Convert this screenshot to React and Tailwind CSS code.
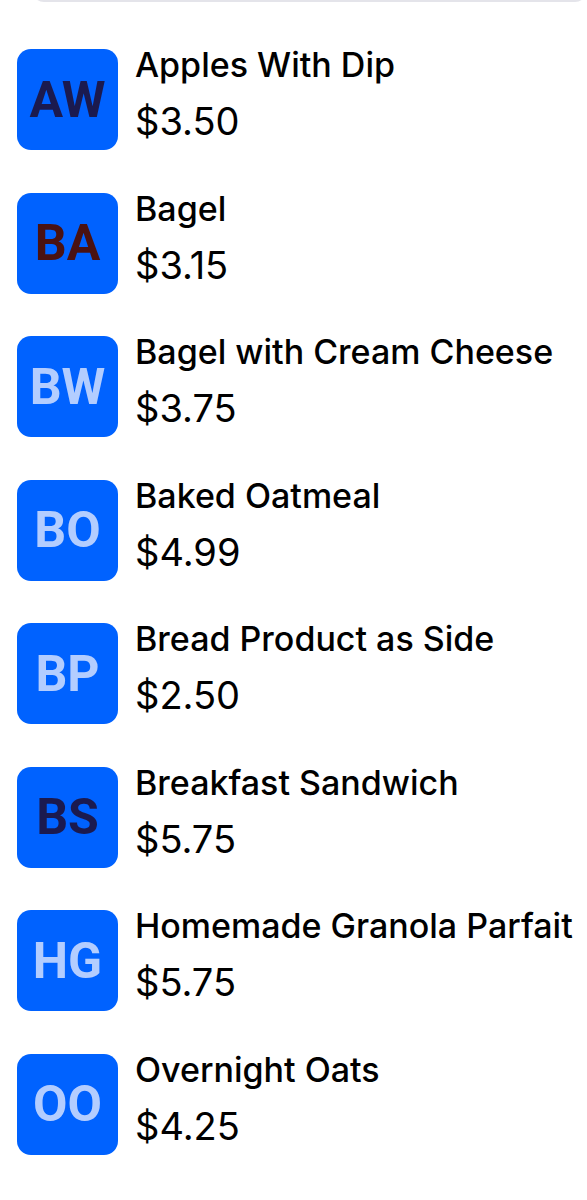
const items = [
  { initials: "AW", name: "Apples With Dip", price: "$3.50", tone: "text-[#1b1a4f]" },
  { initials: "BA", name: "Bagel", price: "$3.15", tone: "text-[#4a1212]" },
  { initials: "BW", name: "Bagel with Cream Cheese", price: "$3.75", tone: "text-[#b3cdff]" },
  { initials: "BO", name: "Baked Oatmeal", price: "$4.99", tone: "text-[#b3cdff]" },
  { initials: "BP", name: "Bread Product as Side", price: "$2.50", tone: "text-[#b3cdff]" },
  { initials: "BS", name: "Breakfast Sandwich", price: "$5.75", tone: "text-[#1b1a4f]" },
  { initials: "HG", name: "Homemade Granola Parfait", price: "$5.75", tone: "text-[#b3cdff]" },
  { initials: "OO", name: "Overnight Oats", price: "$4.25", tone: "text-[#b3cdff]" },
];

export default function App() {
  return (
    <div className="min-h-[1200px] overflow-hidden bg-white font-['Inter',sans-serif] text-black">
      <div className="ml-[32px] -mt-[40px] h-[42px] rounded-xl bg-[#e4e4ea]" />

      <ul className="mt-[47px] flex flex-col gap-[42.5px] pl-[17px]">
        {items.map((item) => (
          <MenuRow key={item.name} {...item} />
        ))}
      </ul>
    </div>
  );
}

function MenuRow({ initials, name, price, tone }) {
  return (
    <li className="flex items-start gap-[17px]">
      <div className="flex h-[101px] w-[101px] shrink-0 items-center justify-center rounded-[14px] bg-[#0062ff]">
        <span
          className={`font-['Roboto',sans-serif] text-[50px] font-bold leading-none ${tone}`}
        >
          {initials}
        </span>
      </div>

      <div className="flex flex-col">
        <p className="-mt-[1px] whitespace-nowrap text-[34px] font-medium leading-[34px]">{name}</p>
        <p className="mt-[20px] text-[38px] leading-[38px]">{price}</p>
      </div>
    </li>
  );
}
